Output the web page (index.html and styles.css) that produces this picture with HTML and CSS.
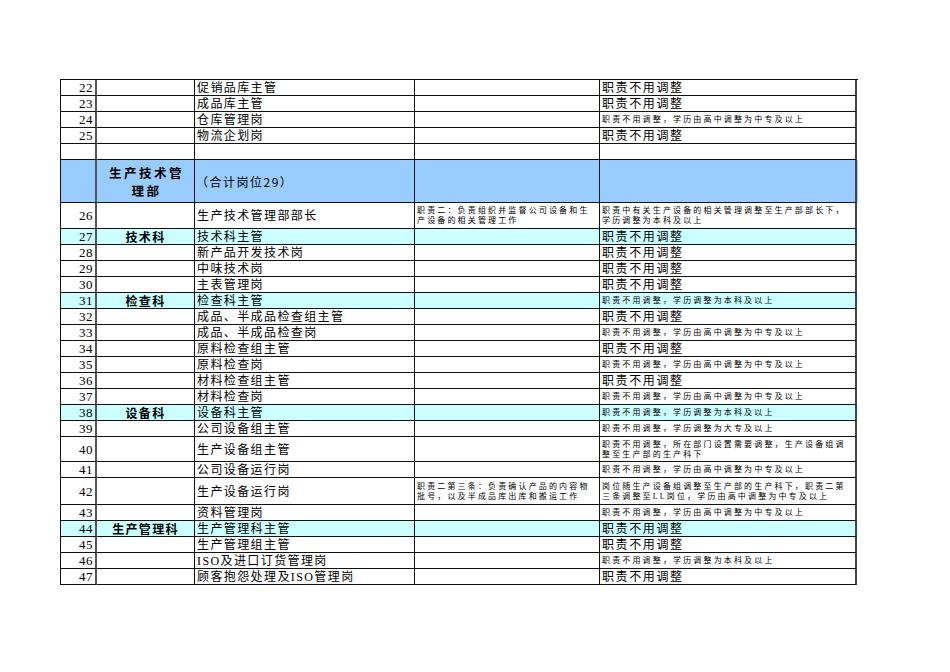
FILE: index.html
```html
<!DOCTYPE html>
<html lang="zh-CN">
<head>
<meta charset="utf-8">
<title>岗位调整表</title>
<link rel="stylesheet" href="styles.css">
</head>
<body>
<div class="sheet">
  <div class="row"><div class="cell num">22</div><div class="cell"></div><div class="cell name">促销品库主管</div><div class="cell"></div><div class="cell big">职责不用调整</div></div>
  <div class="row"><div class="cell num">23</div><div class="cell"></div><div class="cell name">成品库主管</div><div class="cell"></div><div class="cell big">职责不用调整</div></div>
  <div class="row"><div class="cell num">24</div><div class="cell"></div><div class="cell name">仓库管理岗</div><div class="cell"></div><div class="cell small">职责不用调整，学历由高中调整为中专及以上</div></div>
  <div class="row"><div class="cell num">25</div><div class="cell"></div><div class="cell name">物流企划岗</div><div class="cell"></div><div class="cell big">职责不用调整</div></div>
  <div class="row"><div class="cell num"></div><div class="cell"></div><div class="cell name"></div><div class="cell"></div><div class="cell"></div></div>
  <div class="row dept"><div class="cell num"></div><div class="cell dept-name">生产技术管<br>理部</div><div class="cell dept-total">（合计岗位29）</div><div class="cell"></div><div class="cell"></div></div>
  <div class="row h26"><div class="cell num">26</div><div class="cell"></div><div class="cell name">生产技术管理部部长</div><div class="cell small">职责二：负责组织并监督公司设备和生<br>产设备的相关管理工作</div><div class="cell small">职责中有关生产设备的相关管理调整至生产部部长下，<br>学历调整为本科及以上</div></div>
  <div class="row sec"><div class="cell num">27</div><div class="cell secname">技术科</div><div class="cell name">技术科主管</div><div class="cell"></div><div class="cell big">职责不用调整</div></div>
  <div class="row"><div class="cell num">28</div><div class="cell"></div><div class="cell name">新产品开发技术岗</div><div class="cell"></div><div class="cell big">职责不用调整</div></div>
  <div class="row"><div class="cell num">29</div><div class="cell"></div><div class="cell name">中味技术岗</div><div class="cell"></div><div class="cell big">职责不用调整</div></div>
  <div class="row"><div class="cell num">30</div><div class="cell"></div><div class="cell name">主表管理岗</div><div class="cell"></div><div class="cell big">职责不用调整</div></div>
  <div class="row sec"><div class="cell num">31</div><div class="cell secname">检查科</div><div class="cell name">检查科主管</div><div class="cell"></div><div class="cell small">职责不用调整，学历调整为本科及以上</div></div>
  <div class="row"><div class="cell num">32</div><div class="cell"></div><div class="cell name">成品、半成品检查组主管</div><div class="cell"></div><div class="cell big">职责不用调整</div></div>
  <div class="row"><div class="cell num">33</div><div class="cell"></div><div class="cell name">成品、半成品检查岗</div><div class="cell"></div><div class="cell small">职责不用调整，学历由高中调整为中专及以上</div></div>
  <div class="row"><div class="cell num">34</div><div class="cell"></div><div class="cell name">原料检查组主管</div><div class="cell"></div><div class="cell big">职责不用调整</div></div>
  <div class="row"><div class="cell num">35</div><div class="cell"></div><div class="cell name">原料检查岗</div><div class="cell"></div><div class="cell small">职责不用调整，学历由高中调整为中专及以上</div></div>
  <div class="row"><div class="cell num">36</div><div class="cell"></div><div class="cell name">材料检查组主管</div><div class="cell"></div><div class="cell big">职责不用调整</div></div>
  <div class="row"><div class="cell num">37</div><div class="cell"></div><div class="cell name">材料检查岗</div><div class="cell"></div><div class="cell small">职责不用调整，学历由高中调整为中专及以上</div></div>
  <div class="row sec"><div class="cell num">38</div><div class="cell secname">设备科</div><div class="cell name">设备科主管</div><div class="cell"></div><div class="cell small">职责不用调整，学历调整为本科及以上</div></div>
  <div class="row"><div class="cell num">39</div><div class="cell"></div><div class="cell name">公司设备组主管</div><div class="cell"></div><div class="cell small">职责不用调整，学历调整为大专及以上</div></div>
  <div class="row h25"><div class="cell num">40</div><div class="cell"></div><div class="cell name">生产设备组主管</div><div class="cell"></div><div class="cell small">职责不用调整，所在部门设置需要调整，生产设备组调<br>整至生产部的生产科下</div></div>
  <div class="row"><div class="cell num">41</div><div class="cell"></div><div class="cell name">公司设备运行岗</div><div class="cell"></div><div class="cell small">职责不用调整，学历由高中调整为中专及以上</div></div>
  <div class="row h27"><div class="cell num">42</div><div class="cell"></div><div class="cell name">生产设备运行岗</div><div class="cell small">职责二第三条：负责确认产品的内容物<br>批号，以及半成品库出库和搬运工作</div><div class="cell small">岗位随生产设备组调整至生产部的生产科下，职责二第<br>三条调整至LL岗位，学历由高中调整为中专及以上</div></div>
  <div class="row"><div class="cell num">43</div><div class="cell"></div><div class="cell name">资料管理岗</div><div class="cell"></div><div class="cell small">职责不用调整，学历由高中调整为中专及以上</div></div>
  <div class="row sec"><div class="cell num">44</div><div class="cell secname">生产管理科</div><div class="cell name">生产管理科主管</div><div class="cell"></div><div class="cell big">职责不用调整</div></div>
  <div class="row"><div class="cell num">45</div><div class="cell"></div><div class="cell name">生产管理组主管</div><div class="cell"></div><div class="cell big">职责不用调整</div></div>
  <div class="row"><div class="cell num">46</div><div class="cell"></div><div class="cell name">ISO及进口订货管理岗</div><div class="cell"></div><div class="cell small">职责不用调整，学历调整为本科及以上</div></div>
  <div class="row"><div class="cell num">47</div><div class="cell"></div><div class="cell name">顾客抱怨处理及ISO管理岗</div><div class="cell"></div><div class="cell big">职责不用调整</div></div>
</div>
</body>
</html>
```
FILE: styles.css
```css
html, body {
  margin: 0;
  padding: 0;
  background: #ffffff;
}
body {
  font-family: "Liberation Serif", "Noto Sans CJK SC", serif;
  color: #000;
}
.sheet {
  margin: 79px 0 0 60px;
  width: 797px;
  border-top: 1px solid #111;
  border-left: 1px solid #111;
}
.row {
  display: grid;
  grid-template-columns: 36px 98px 220px 185px 257px;
  height: 16px;
}
.row.h25 { height: 25px; }
.row.h26 { height: 26px; }
.row.h27 { height: 27px; }
.row.dept { height: 43px; background: #99ccff; }
.row.sec { background: #ccffff; }
.cell {
  box-sizing: border-box;
  border-right: 1px solid #111;
  border-bottom: 1px solid #111;
  display: flex;
  align-items: center;
  overflow: hidden;
  white-space: nowrap;
  min-width: 0;
  padding-top: 1px;
}
.cell.num {
  border-right: 2px solid #555;
  justify-content: flex-end;
  padding-right: 2px;
  font-size: 13px;
  letter-spacing: 0.5px;
  line-height: 14px;
}
.cell:last-child {
  border-right: 2px solid #444;
}
.cell.name {
  padding-left: 2px;
  font-size: 12px;
  letter-spacing: 1.4px;
  line-height: 14px;
}
.cell.big {
  padding-left: 2px;
  font-size: 12px;
  letter-spacing: 1.6px;
  line-height: 14px;
}
.cell.small {
  padding-left: 2px;
  font-size: 8px;
  letter-spacing: 2.15px;
  line-height: 10px;
}
.cell.secname {
  justify-content: center;
  font-family: "Noto Sans CJK SC", sans-serif;
  font-weight: 700;
  font-size: 12px;
  letter-spacing: 1.3px;
  line-height: 14px;
}
.cell.dept-name {
  justify-content: center;
  text-align: center;
  font-family: "Noto Sans CJK SC", sans-serif;
  font-weight: 700;
  font-size: 12.5px;
  letter-spacing: 2.5px;
  line-height: 18px;
  padding-top: 2px;
  padding-left: 2px;
}
.cell.dept-total {
  padding-left: 1px;
  font-family: "Noto Sans CJK SC", sans-serif;
  font-size: 12px;
  letter-spacing: 1.5px;
}
```
